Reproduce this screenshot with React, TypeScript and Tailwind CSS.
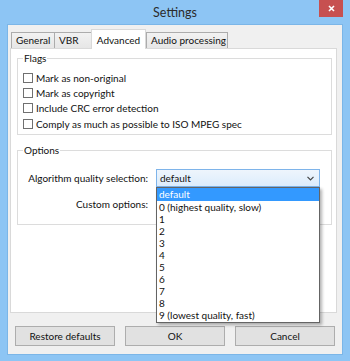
import React from 'react';

const font = { fontFamily: 'Lato, "Open Sans", Arial, sans-serif' };

const flags = [
  'Mark as non-original',
  'Mark as copyright',
  'Include CRC error detection',
  'Comply as much as possible to ISO MPEG spec',
];

const qualities = [
  'default',
  '0 (highest quality, slow)',
  '1',
  '2',
  '3',
  '4',
  '5',
  '6',
  '7',
  '8',
  '9 (lowest quality, fast)',
];

const Tab: React.FC<{ label: string; active?: boolean; w: string }> = ({ label, active, w }) =>
  active ? (
    <div className={`${w} h-[20px] -mb-px relative z-10 bg-white border border-[#d9d9d9] border-b-0 flex items-start justify-center pt-[3px] text-[10px] text-[#111]`}>
      {label}
    </div>
  ) : (
    <div className={`${w} h-[16px] bg-gradient-to-b from-[#f2f2f2] to-[#e6e6e6] border border-[#acacac] border-b-0 -mr-px flex items-center pl-[4px] text-[10px] text-[#111]`}>
      {label}
    </div>
  );

const CheckRow: React.FC<{ label: string }> = ({ label }) => (
  <div className="flex items-center h-[15.3px]">
    <div className="w-[10px] h-[10px] border border-[#707070] bg-white mr-[3px]" />
    <span className="text-[10px] text-[#111] leading-none">{label}</span>
  </div>
);

const Button: React.FC<{ label: string }> = ({ label }) => (
  <div className="w-[100px] h-[20px] bg-[#e1e1e1] border border-[#adadad] flex items-center justify-center text-[10px] text-[#111]">
    {label}
  </div>
);

export default function App() {
  return (
    <div style={font} className="w-[350px] h-[361px] bg-[#8dc5f4] flex flex-col overflow-hidden">
      {/* Title bar */}
      <div className="h-[24px] relative flex items-center justify-center shrink-0">
        <span className="text-[12.5px] text-[#2b2b2b] mt-[2px]">Settings</span>
        <div className="absolute right-[7px] top-0 w-[24px] h-[17px] bg-[#c75050] flex items-center justify-center">
          <svg width="7" height="7" viewBox="0 0 7 7">
            <path d="M1 1 L6 6 M6 1 L1 6" stroke="white" strokeWidth="1.6" />
          </svg>
        </div>
      </div>

      {/* Client area */}
      <div className="ml-[7px] mr-[7px] mb-[6px] flex-1 border border-[#7bb6e8] bg-[#f0f0f0] flex flex-col pl-[2px] pt-[3px]">
        {/* Tabs */}
        <div className="flex items-end h-[20px] pl-[1px]">
          <Tab label="General" w="w-[44px]" />
          <Tab label="VBR" w="w-[38px]" />
          <Tab label="Advanced" active w="w-[55px]" />
          <Tab label="Audio processing" w="w-[82px]" />
        </div>

        {/* Tab panel */}
        <div className="w-[327px] h-[265px] bg-white border border-[#d9d9d9] pl-[6px] pt-[9px] relative">
          {/* Flags group */}
          <div className="relative w-[315px] h-[77px] border border-[#dcdcdc] pl-[5px] pt-[11px]">
            <span className="absolute -top-[8px] left-[5px] bg-white px-[1px] text-[10px] text-[#111]">Flags</span>
            <div className="flex flex-col">
              {flags.map((f) => (
                <CheckRow key={f} label={f} />
              ))}
            </div>
          </div>

          {/* Options group */}
          <div className="relative w-[315px] h-[75px] border border-[#dcdcdc] mt-[15px] pt-[18px]">
            <span className="absolute -top-[8px] left-[5px] bg-white px-[1px] text-[10px] text-[#111]">Options</span>
            <div className="flex items-center h-[18px]">
              <span className="w-[130px] text-right text-[10px] text-[#111]">Algorithm quality selection:</span>
              <div className="ml-[8px] w-[164px] h-[18px] border border-[#7eb4ea] bg-gradient-to-b from-[#eef5fc] to-[#dcecfc] flex items-center justify-between pl-[3px] pr-[5px] text-[10px] text-[#111]">
                <span>default</span>
                <svg width="7" height="5" viewBox="0 0 7 5">
                  <path d="M0.5 0.8 L3.5 3.8 L6.5 0.8" stroke="#444" strokeWidth="1.2" fill="none" />
                </svg>
              </div>
            </div>
            <div className="flex items-center h-[18px] mt-[8px]">
              <span className="w-[130px] text-right text-[10px] text-[#111]">Custom options:</span>
            </div>

            {/* Open dropdown list */}
            <div className="absolute left-[138px] top-[36px] w-[164px] border border-[#646464] bg-white shadow-[2px_2px_3px_rgba(0,0,0,0.3)] z-20 flex flex-col pb-[1px]">
              {qualities.map((q, i) => (
                <div
                  key={q}
                  className={`pl-[2px] text-[10px] ${i === 0 ? 'h-[13px] leading-[13px] bg-[#3399ff] text-white' : 'h-[12px] leading-[12px] text-[#111]'}`}
                >
                  {q}
                </div>
              ))}
            </div>
          </div>
        </div>

        {/* Buttons */}
        <div className="flex gap-[10px] pl-[5px] mt-[13px]">
          <Button label="Restore defaults" />
          <Button label="OK" />
          <Button label="Cancel" />
        </div>
      </div>
    </div>
  );
}
